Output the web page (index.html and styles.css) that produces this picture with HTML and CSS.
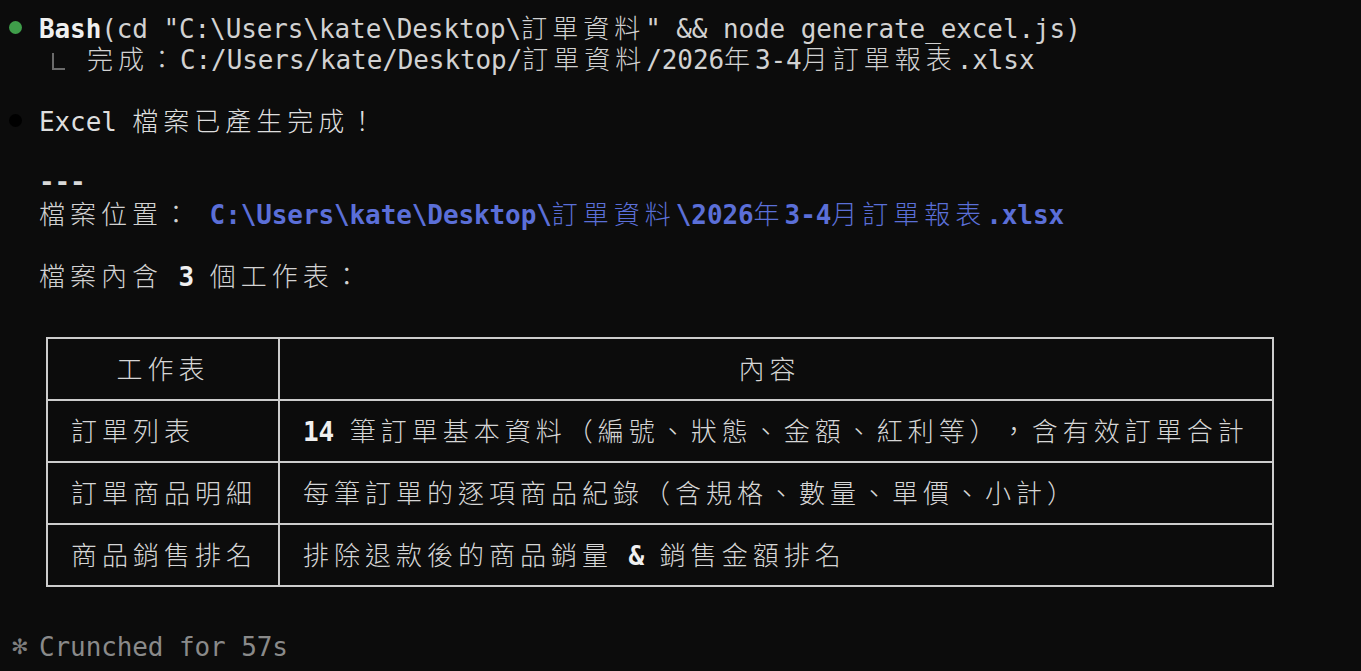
FILE: index.html
```html
<!DOCTYPE html>
<html lang="zh-Hant">
<head>
<meta charset="utf-8">
<title>Terminal</title>
<link rel="stylesheet" href="styles.css">
</head>
<body>
<main class="term">
  <div class="line">
    <span class="mark"><span class="dot dot-green"></span></span>
    <span class="txt"><b class="hi">Bash</b>(cd "C:\Users\kate\Desktop\<span class="cj">訂單資料</span>" &amp;&amp; node generate_excel.js)</span>
  </div>
  <div class="line">
    <span class="mark"></span>
    <span class="elbow"></span>
    <span class="txt"><span class="cj">完成：</span>C:/Users/kate/Desktop/<span class="cj">訂單資料</span>/2026<span class="cj">年</span>3-4<span class="cj">月訂單報表</span>.xlsx</span>
  </div>
  <div class="line"></div>
  <div class="line">
    <span class="mark"><span class="dot dot-black"></span></span>
    <span class="txt hi2">Excel <span class="cj">檔案已產生完成！</span></span>
  </div>
  <div class="line"></div>
  <div class="line">
    <span class="mark"></span>
    <span class="txt dashes">---</span>
  </div>
  <div class="line">
    <span class="mark"></span>
    <span class="txt"><span class="cj">檔案位置：</span> <span class="path">C:\Users\kate\Desktop\<span class="cj">訂單資料</span>\2026<span class="cj">年</span>3-4<span class="cj">月訂單報表</span>.xlsx</span></span>
  </div>
  <div class="line"></div>
  <div class="line">
    <span class="mark"></span>
    <span class="txt"><span class="cj">檔案內含</span> <b class="hi">3</b> <span class="cj">個工作表：</span></span>
  </div>
  <div class="line"></div>
  <div class="tblwrap">
    <table class="sheets">
      <colgroup><col class="c1"><col class="c2"></colgroup>
      <thead>
        <tr><th class="h1"><span class="cj">工作表</span></th><th class="h2"><span class="cj">內容</span></th></tr>
      </thead>
      <tbody>
        <tr><td><span class="cj">訂單列表</span></td><td><b class="hi">14</b> <span class="cj">筆訂單基本資料（編號、狀態、金額、紅利等），含有效訂單合計</span></td></tr>
        <tr><td><span class="cj">訂單商品明細</span></td><td><span class="cj">每筆訂單的逐項商品紀錄（含規格、數量、單價、小計）</span></td></tr>
        <tr><td><span class="cj">商品銷售排名</span></td><td><span class="cj">排除退款後的商品銷量</span> <b class="hi">&amp;</b> <span class="cj">銷售金額排名</span></td></tr>
      </tbody>
    </table>
  </div>
  <div class="line"></div>
  <div class="line status">
    <span class="mark"><span class="star">✻</span></span>
    <span class="txt">Crunched for 57s</span>
  </div>
</main>
</body>
</html>
```
FILE: styles.css
```css
html, body {
  margin: 0;
  padding: 0;
  background: #0c0c0c;
}
body {
  width: 1361px;
  height: 671px;
  overflow: hidden;
}
.term {
  padding: 12px 0 0 8px;
  font-family: "DejaVu Sans Mono", "Noto Sans CJK TC", monospace;
  font-size: 26px;
  line-height: 31px;
  letter-spacing: -0.1px;
  color: #d2d2d2;
  text-spacing-trim: space-all;
  font-kerning: none;
}
.line {
  height: 31px;
  display: flex;
  align-items: center;
  white-space: pre;
}
.mark {
  width: 31px;
  flex: none;
  display: flex;
  align-items: center;
}
.dot {
  width: 13px;
  height: 13px;
  border-radius: 50%;
  margin-left: 1px;
}
.dot-green { background: #3f9e4a; }
.dot-black { background: #000; }
.txt { white-space: pre; }
.cj {
  font-family: "Noto Sans CJK TC", sans-serif;
  letter-spacing: 5px;
  font-weight: 300;
  text-spacing-trim: space-all;
}
.hi {
  font-weight: bold;
  color: #f0f0f0;
}
.hi2 { color: #dedede; }
.elbow {
  flex: none;
  align-self: flex-start;
  margin-top: 10px;
  margin-left: 13px;
  margin-right: 22px;
  width: 11px;
  height: 15px;
  border-left: 2px solid #6a6a6a;
  border-bottom: 2px solid #6a6a6a;
}
.dashes {
  color: #d8d8d8;
  font-weight: bold;
}
.path {
  color: #5b6fd8;
  font-weight: bold;
}
.path .cj { font-weight: 300; }
.tblwrap {
  padding: 14.5px 0 14.5px 38px;
}
.sheets {
  border-collapse: collapse;
  table-layout: fixed;
  width: 1228px;
  border: 2px solid #cdcdcd;
}
.sheets .c1 { width: 232px; }
.sheets th,
.sheets td {
  border: 2px solid #cdcdcd;
  height: 62px;
  padding: 0 0 0 23px;
  box-sizing: border-box;
  font-weight: normal;
  text-align: left;
  vertical-align: middle;
  white-space: pre;
  color: #d6d6d6;
}
.sheets th {
  text-align: center;
  padding: 0;
}
.sheets th.h2 { padding-right: 13px; }
.status { color: #8a8a8a; }
.star {
  font-family: "DejaVu Sans", sans-serif;
  font-size: 21px;
  color: #7e7e7e;
  margin-left: 3px;
}
```
